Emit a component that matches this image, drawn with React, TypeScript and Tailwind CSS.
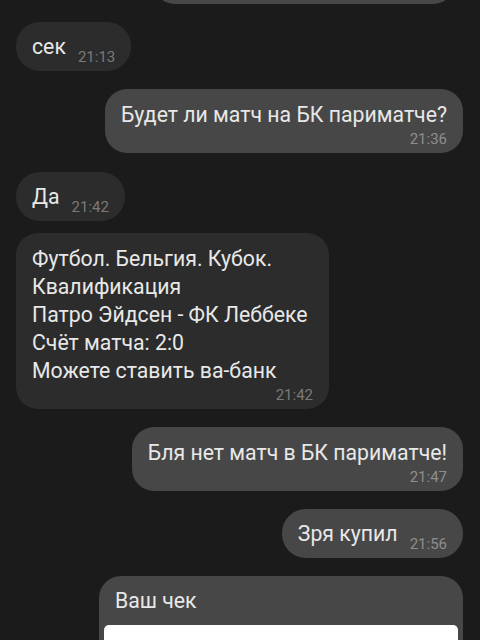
import React from 'react';

// Чат: тёмная тема, входящие слева, исходящие справа

type Msg = {
  id: number;
  out: boolean;
  lines: string[];
  time: string;
  mt: string;
  w?: string;
};

const messages: Msg[] = [
  { id: 1, out: false, lines: ['сек'], time: '21:13', mt: 'mt-[18px]' },
  { id: 2, out: true, lines: ['Будет ли матч на БК париматче?'], time: '21:36', mt: 'mt-[18px]' },
  { id: 3, out: false, lines: ['Да'], time: '21:42', mt: 'mt-[19px]' },
  {
    id: 4,
    out: false,
    lines: [
      'Футбол. Бельгия. Кубок.',
      'Квалификация',
      'Патро Эйдсен - ФК Леббеке',
      'Счёт матча: 2:0',
      'Можете ставить ва-банк',
    ],
    time: '21:42',
    mt: 'mt-[12px]',
    w: 'w-[313px]',
  },
  { id: 5, out: true, lines: ['Бля нет матч в БК париматче!'], time: '21:47', mt: 'mt-[18px]' },
  { id: 6, out: true, lines: ['Зря купил'], time: '21:56', mt: 'mt-[18px]' },
];

function Bubble({ msg }: { msg: Msg }) {
  const bg = msg.out ? 'bg-[#474747] self-end mr-[17px]' : 'bg-[#2c2c2c] self-start ml-4';
  const timeColor = msg.out ? 'text-[#8e8e8e]' : 'text-[#7a7a7a]';
  const short = msg.lines.length === 1 && msg.lines[0].length < 12;

  if (short) {
    return (
      <div className={`${bg} ${msg.mt} rounded-[24px] pl-4 pr-4 pt-[11px] pb-1 flex items-end gap-3`}>
        <span className="text-[21.25px] leading-[28px] mb-[6px] text-[#e8e8e8]">{msg.lines[0]}</span>
        <span className={`text-[15px] leading-5 ${timeColor}`}>{msg.time}</span>
      </div>
    );
  }

  return (
    <div className={`${bg} ${msg.mt} ${msg.w ?? ''} rounded-[22px] px-4 pt-3 pb-1 flex flex-col`}>
      {msg.lines.map((l, i) => (
        <span key={i} className="text-[21.25px] leading-[28px] text-[#e8e8e8] whitespace-nowrap">
          {l}
        </span>
      ))}
      <span className={`self-end text-[15px] leading-5 ${timeColor}`}>{msg.time}</span>
    </div>
  );
}

export default function App() {
  return (
    <div
      className="w-[480px] h-[640px] overflow-hidden bg-[#1b1b1b] flex flex-col"
      style={{ fontFamily: 'Roboto, "Noto Sans", sans-serif' }}
    >
      {/* хвост предыдущего сообщения */}
      <div className="self-end mr-[25px] -mt-[56px] h-[60px] w-[302px] rounded-[22px] bg-[#474747] shrink-0" />

      {messages.map((m) => (
        <Bubble key={m.id} msg={m} />
      ))}

      {/* сообщение с чеком */}
      <div className="self-end mr-[17px] mt-[18px] w-[364px] rounded-t-[22px] bg-[#474747] pt-[11px] px-[5px] shrink-0 h-[200px] flex flex-col">
        <span className="px-[11px] text-[21.25px] leading-[28px] text-[#e8e8e8]">Ваш чек</span>
        <div className="mt-[10px] flex-1 rounded-[5px] bg-white" />
      </div>
    </div>
  );
}
